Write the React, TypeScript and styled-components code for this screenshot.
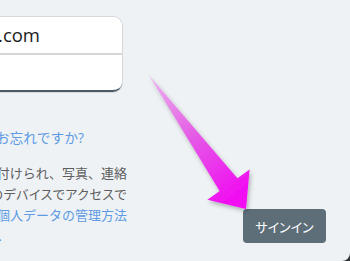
import React from 'react'
import styled, { createGlobalStyle } from 'styled-components'

const GlobalStyle = createGlobalStyle`
    html, body {
        margin: 0;
        padding: 0;
        background: #2f3336;
    }
    * { box-sizing: border-box; }
`

const lines = [
    { text: 'アカウントですべてが結び付けられ、写真、連絡' },
    { text: '先、設定、ファイルにすべてのデバイスでアクセスで', kana: true },
    { text: 'きます。', link: '個人データの管理方法' },
]

export default function App() {
    return (
        <>
            <GlobalStyle />
            <StyledPage>
                <Column>
                    <FieldGroup>
                        <Field $pos='top'><FieldValue>taro@outlook.com</FieldValue></Field>
                        <Field $pos='bottom' />
                    </FieldGroup>
                    <ForgotRow><Link>パスワードをお忘れですか?</Link></ForgotRow>
                    <Paragraph>
                        {lines.map((l, k) => (
                            <Line key={k} $kana={l.kana}>{l.text}{l.link && <Link>{l.link}</Link>}</Line>
                        ))}
                        <Line $end={2}><Link>について.</Link></Line>
                    </Paragraph>
                </Column>
                <Actions>
                    <Button>サインイン</Button>
                </Actions>
                <Arrow viewBox='0 0 350 261' width={350} height={261}>
                    <defs>
                        <linearGradient id='arrowFill' gradientUnits='userSpaceOnUse' x1='148' y1='74' x2='240' y2='200'>
                            <stop offset='0' stopColor='#ecb6ed' />
                            <stop offset='0.5' stopColor='#e45ae6' />
                            <stop offset='1' stopColor='#f208f2' />
                        </linearGradient>
                        <filter id='arrowShadow' x='-20%' y='-20%' width='140%' height='140%'>
                            <feDropShadow dx='1.5' dy='2.5' stdDeviation='2' floodColor='#000' floodOpacity='0.28' />
                        </filter>
                    </defs>
                    <polygon
                        points='147.5,73.5 237.4,178.2 249.6,169.4 246,209 207.4,199.8 219.6,191 148.5,74.5'
                        fill='url(#arrowFill)'
                        filter='url(#arrowShadow)'
                    />
                </Arrow>
            </StyledPage>
        </>
    )
}

const StyledPage = styled.div`
    position: relative;
    width: 350px;
    height: 261px;
    overflow: hidden;
    display: flex;
    background-color: #eef2f5;
    border-bottom-right-radius: 8px;
    font-family: "Open Sans", "Noto Sans CJK JP", sans-serif;
`

const Column = styled.div`
    flex: none;
    width: 287px;
    margin-left: -160px;
    padding-top: 17px;
    display: flex;
    flex-direction: column;
`

const FieldGroup = styled.div`
    margin-right: 5px;
    display: flex;
    flex-direction: column;
    border-radius: 9px;
    box-shadow: 0 0 0 1px #d5d8db;
    background-color: #fff;
`

const Field = styled.div<{ $pos: 'top' | 'bottom' }>`
    height: ${p => p.$pos === 'top' ? 38 : 37}px;
    display: flex;
    align-items: center;
    justify-content: flex-end;
    padding-right: 82px;
    padding-bottom: 1px;
    background-color: #fff;
    border-radius: ${p => p.$pos === 'top' ? '9px 9px 0 0' : '0 0 9px 9px'};
    border-bottom: 2px solid ${p => p.$pos === 'top' ? '#d3d5d7' : '#4a5964'};
    font-size: 18.5px;
    color: #1b1b1b;
`

const FieldValue = styled.span`
    white-space: nowrap;
`

const ForgotRow = styled.div`
    margin-top: 35px;
    margin-right: 43px;
    height: 20px;
    display: flex;
    align-items: center;
    justify-content: flex-end;
    white-space: nowrap;
    font-size: 13.8px;
`

const Link = styled.span`
    color: #5e9be4;
`

const Paragraph = styled.div`
    margin-top: 15px;
    display: flex;
    flex-direction: column;
    font-size: 13px;
    color: #5d5d5d;
`

const Line = styled.div<{ $end?: number; $kana?: boolean }>`
    height: 21px;
    display: flex;
    align-items: center;
    justify-content: flex-end;
    white-space: nowrap;
    margin-right: ${p => p.$end !== undefined ? 127 - p.$end : 0}px;
    ${p => p.$kana && 'font-feature-settings: "palt"; letter-spacing: 0.5px;'}
`

const Actions = styled.div`
    flex: 1;
    display: flex;
    align-items: flex-end;
    justify-content: flex-end;
    padding: 0 24px 18px 0;
`

const Button = styled.button`
    width: 83px;
    height: 34px;
    border: 0;
    border-radius: 4px;
    background-color: #5e6e79;
    color: #fff;
    font-family: inherit;
    font-feature-settings: "palt";
    font-size: 13px;
`

const Arrow = styled.svg`
    position: absolute;
    top: 0;
    left: 0;
    pointer-events: none;
`
